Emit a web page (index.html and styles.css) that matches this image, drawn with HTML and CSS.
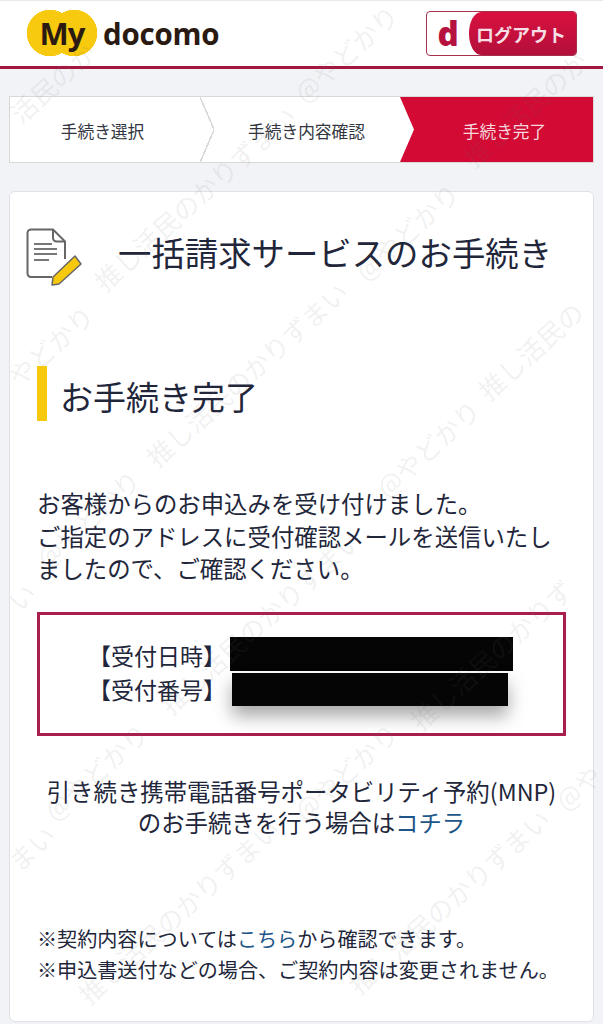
FILE: index.html
```html
<!DOCTYPE html>
<html lang="ja">

<head>
    <meta charset="UTF-8">
    <meta name="viewport" content="width=device-width, initial-scale=1.0">
    <title>一括請求サービスのお手続き</title>
    <link rel="stylesheet" href="styles.css">
</head>

<body>
    <header class="site-header">
        <div class="logo">
            <span class="logo-my">My</span>
            <span class="logo-docomo">docomo</span>
        </div>
        <a class="logout" href="#">
            <span class="logout-d">d</span>
            <span class="logout-label">ログアウト</span>
        </a>
    </header>

    <ol class="steps">
        <li class="step step-first">手続き選択</li>
        <li class="step step-second">手続き内容確認</li>
        <li class="step step-current">手続き完了</li>
    </ol>

    <main class="card">
        <div class="page-title">
            <svg class="title-icon" viewBox="0 0 60 60" width="60" height="60">
                <path d="M27 50H6a3.500 3.500 0 0 1-3.500-3.500V6A3.500 3.500 0 0 1 6 2.500H28L40 14.500V32" fill="#fff" stroke="#666" stroke-width="2"/>
                <path d="M28 2.500V11a3.500 3.500 0 0 0 3.500 3.500H40" fill="none" stroke="#666" stroke-width="2"/>
                <path d="M9 17H27M9 22H32M9 27H32M9 33H24" fill="none" stroke="#777" stroke-width="2"/>
                <path d="M27 58L28 50L50 29L56 37L34 57Z" fill="#f6c90e" stroke="#666" stroke-width="1.500" stroke-linejoin="round"/>
            </svg>
            <h1>一括請求サービスのお手続き</h1>
        </div>

        <h2 class="section-title">お手続き完了</h2>

        <p class="message">お客様からのお申込みを受け付けました。<br>ご指定のアドレスに受付確認メールを送信いたし<br>ましたので、ご確認ください。</p>

        <div class="receipt">
            <div class="receipt-row">
                <span class="receipt-label">【受付日時】</span>
                <span class="redact redact-date"></span>
            </div>
            <div class="receipt-row">
                <span class="receipt-label">【受付番号】</span>
                <span class="redact redact-number"></span>
            </div>
        </div>

        <p class="next-step">引き続き携帯電話番号ポータビリティ予約(MNP)<br>のお手続きを行う場合は<a href="#">コチラ</a></p>

        <ul class="notes">
            <li>※契約内容については<a href="#">こちら</a>から確認できます。</li>
            <li>※申込書送付などの場合、ご契約内容は変更されません。</li>
        </ul>
    </main>

    <!-- watermark over the whole screenshot -->
    <div class="watermarks">
        <span class="wm w1">推し活民のかりずまい</span>
        <span class="wm w2">推し活民のかりずまい</span>
        <span class="wm w3">推し活民の</span>
        <span class="wm w4">推し活民のかりずまい</span>
        <span class="wm w5">推し活民のかりずまい</span>
        <span class="wm w6">推し活民のかりずまい</span>
        <span class="wm w7">推し活民のかりず</span>
        <span class="wm w8">まい</span>
        <span class="wm w9">い</span>
        <span class="wm w10">活民のか</span>
        <span class="wm w11">推し活民のか</span>
        <span class="wm h1">@やどかり</span>
        <span class="wm h2">@やどかり</span>
        <span class="wm h3">やどかり</span>
        <span class="wm h4">@やどかり</span>
        <span class="wm h5">@やどかり</span>
        <span class="wm h6">@やどかり</span>
        <span class="wm h7">@やどかり</span>
        <span class="wm h8">@や</span>
    </div>
</body>

</html>
```
FILE: styles.css
```css
* {
    box-sizing: border-box;
}

html,
body {
    margin: 0;
    padding: 0;
    height: 1024px;
    overflow: hidden;
}

body {
    position: relative;
    font-family: "Noto Sans CJK JP", "Noto Sans", sans-serif;
    color: #22263a;
    background-color: #f1f3f6;
}

a {
    color: #1d5688;
    text-decoration: none;
}

/* header */
.site-header {
    height: 69px;
    padding: 10px 27px 0;
    display: flex;
    justify-content: space-between;
    align-items: flex-start;
    background-color: #fff;
    border-top: 1px solid #e6eaec;
    border-bottom: 3px solid #a3173f;
}

.logo {
    display: flex;
    align-items: center;
    height: 46px;
    margin-top: -1px;
}

.logo-my {
    width: 70px;
    height: 46px;
    display: flex;
    align-items: center;
    justify-content: center;
    font-family: "Open Sans", sans-serif;
    font-weight: 700;
    font-size: 31px;
    letter-spacing: -1px;
    color: #2b1a12;
    background:
        radial-gradient(circle at 23px 23px, #f7c90f 23px, transparent 23.500px),
        radial-gradient(circle at 47px 23px, #f7c90f 23px, transparent 23.500px);
}

.logo-docomo {
    margin-left: 6px;
    font-family: "Open Sans", sans-serif;
    font-weight: 700;
    font-size: 29.500px;
    letter-spacing: -0.2px;
    color: #2b1a12;
}

.logout {
    width: 151px;
    height: 45px;
    margin-right: -1px;
    display: flex;
    align-items: stretch;
    background-color: #fff;
    border: 1px solid #a8304f;
    border-radius: 4px;
    overflow: hidden;
}

.logout-d {
    width: 42px;
    display: flex;
    align-items: center;
    justify-content: center;
    font-family: "Open Sans", sans-serif;
    font-weight: 800;
    font-size: 33px;
    line-height: 36px;
    color: #b5123e;
}

.logout-label {
    flex: 1;
    display: flex;
    align-items: center;
    padding-left: 7px;
    font-weight: 700;
    font-size: 18px;
    color: #f6dfe4;
    background: linear-gradient(#d9113f, #b30f3b);
    border-radius: 12px 0 0 12px / 50% 0 0 50%;
    white-space: nowrap;
}

/* steps */
.steps {
    list-style: none;
    margin: 27px 9px 0;
    padding: 0;
    height: 67px;
    display: flex;
    background-color: #fff;
    border: 1px solid #d8d8d8;
    font-size: 16.700px;
    color: #33363f;
}

.step {
    position: relative;
    display: flex;
    align-items: center;
    justify-content: center;
    padding-top: 2px;
}

.step-first {
    width: 190px;
    padding-right: 5px;
}

.step-second {
    width: 200px;
    padding-left: 13px;
}

.step-current {
    flex: 1;
    padding-left: 16px;
    color: #f5d9df;
    background-color: #d20a34;
    clip-path: polygon(0 0, 100% 0, 100% 100%, 0 100%, 14px 50%);
}

.step-first::after {
    content: "";
    position: absolute;
    top: 0;
    right: -14px;
    width: 14px;
    height: 100%;
    background: linear-gradient(to top right, transparent 47%, #d9d9d9 47%, #d9d9d9 53%, transparent 53%) top / 100% 50% no-repeat,
        linear-gradient(to bottom right, transparent 47%, #d9d9d9 47%, #d9d9d9 53%, transparent 53%) bottom / 100% 50% no-repeat;
}

/* card */
.card {
    height: 831px;
    margin: 28px 9px 0;
    padding: 0 27px;
    background-color: #fff;
    border: 1px solid #dfe1e4;
    border-radius: 6px;
}

.page-title {
    height: 96px;
    margin: 0 -12px;
    padding-top: 35px;
    display: flex;
    align-items: flex-start;
}

.title-icon {
    flex: none;
}

.page-title h1 {
    margin: -4px 0 0 33px;
    font-weight: 400;
    font-size: 33.400px;
    line-height: 58px;
    white-space: nowrap;
}

.section-title {
    height: 55px;
    margin: 78px 0 0;
    padding-left: 13px;
    border-left: 10px solid #f6c90e;
    font-weight: 400;
    font-size: 33px;
    line-height: 60px;
}

.message {
    margin: 66px 0 0;
    font-size: 23.400px;
    line-height: 32.500px;
    white-space: nowrap;
}

.receipt {
    height: 124px;
    margin: 27px 0 0;
    padding-top: 22px;
    border: 3px solid #a81f4e;
}

.receipt-row {
    height: 34px;
    padding-left: 48px;
    display: flex;
    align-items: center;
}

.receipt-label {
    width: 142px;
    padding-top: 3px;
    font-size: 23px;
    line-height: 30px;
    white-space: nowrap;
}

.redact {
    display: block;
    background-color: #050505;
}

.redact-date {
    width: 283px;
    height: 34px;
}

.redact-number {
    width: 276px;
    height: 33px;
    margin: 4px 0 0 2px;
    box-shadow: 0 10px 18px rgba(0, 0, 0, 0.35);
}

.next-step {
    margin: 40px -9px 0;
    font-size: 23.400px;
    line-height: 31px;
    text-align: center;
    white-space: nowrap;
}

.notes {
    list-style: none;
    margin: 85px 0 0;
    padding: 0;
    font-size: 20.100px;
    line-height: 31px;
    white-space: nowrap;
}

/* watermark */
.watermarks {
    position: absolute;
    top: 0;
    left: 0;
    width: 603px;
    height: 1024px;
    overflow: hidden;
    pointer-events: none;
}

.wm {
    position: absolute;
    font-size: 26px;
    line-height: 26px;
    white-space: nowrap;
    color: rgba(110, 110, 110, 0.1);
    transform: rotate(-42deg);
    transform-origin: 0 50%;
}

.w1 { left: 98px; top: 272px; }
.w2 { left: 150px; top: 448px; }
.w3 { left: 482px; top: 381px; }
.w4 { left: 352px; top: 975px; }
.w5 { left: 82px; top: 985px; }
.w6 { left: 164px; top: 695px; }
.w7 { left: 414px; top: 711px; }
.w8 { left: 12px; top: 852px; }
.w9 { left: 12px; top: 592px; }
.w10 { left: 14px; top: 104px; }
.w11 { left: 467px; top: 148px; }

.h1 { left: 298px; top: 83px; }
.h2 { left: 359px; top: 261px; }
.h3 { left: 12px; top: 367px; }
.h4 { left: 380px; top: 478px; }
.h5 { left: 40px; top: 548px; }
.h6 { left: 48px; top: 801px; }
.h7 { left: 298px; top: 801px; }
.h8 { left: 559px; top: 791px; }
```
